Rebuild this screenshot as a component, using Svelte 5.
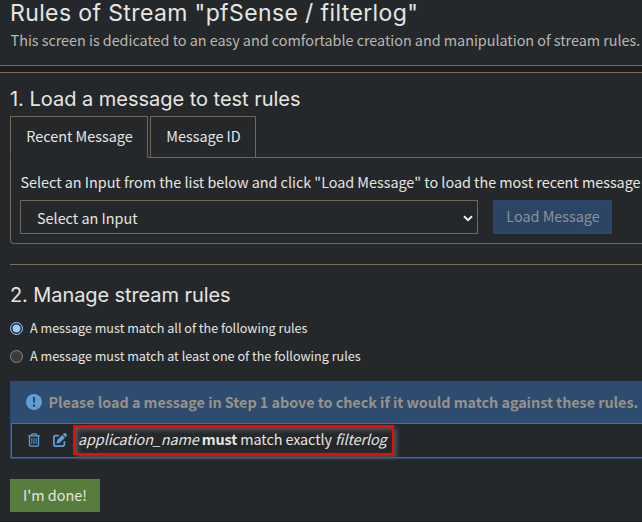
<script>
  let mode = $state('all');
  let tab = $state('recent');
</script>

<main class="page">
  <header class="card intro">
    <h1>Rules of Stream "pfSense / filterlog"</h1>
    <p>This screen is dedicated to an easy and comfortable creation and manipulation of stream rules.</p>
  </header>

  <section class="card body">
    <h2>1. Load a message to test rules</h2>
    <nav class="tabs">
      <button class="tab t1" class:active={tab === 'recent'} onclick={() => (tab = 'recent')}>Recent Message</button>
      <button class="tab t2" class:active={tab === 'id'} onclick={() => (tab = 'id')}>Message ID</button>
      <span class="rest"></span>
    </nav>
    <div class="panel">
      <p class="hint">Select an Input from the list below and click "Load Message" to load the most recent message</p>
      <div class="form">
        <div class="select">
          <span>Select an Input</span>
          <svg width="10" height="7" viewBox="0 0 10 7"><path d="M1 1.2 5 5.2 9 1.2" fill="none" stroke="#f0f0ee" stroke-width="2" /></svg>
        </div>
        <button class="load" disabled>Load Message</button>
      </div>
    </div>

    <hr />

    <h2 class="second">2. Manage stream rules</h2>
    <label class="option"><span class="radio" class:on={mode === 'all'}></span><span>A message must match all of the following rules</span></label>
    <label class="option"><span class="radio" class:on={mode === 'one'}></span><span>A message must match at least one of the following rules</span></label>

    <div class="rules">
      <div class="notice">
        <svg width="16" height="16" viewBox="0 0 16 16"><circle cx="8" cy="8" r="8" fill="#629dd4" /><path d="M6.8 3h2.4l-.35 6h-1.7z" fill="#2e4c70" /><circle cx="8" cy="11.7" r="1.35" fill="#2e4c70" /></svg>
        <strong>Please load a message in Step 1 above to check if it would match against these rules.</strong>
      </div>
      <div class="rule">
        <svg class="trash" width="12" height="14" viewBox="0 0 448 512"><path fill="#5f9fdb" d="M170.500 51.600L151.500 80h145l-19-28.400c-1.500-2.200-4-3.600-6.700-3.600h-93.700c-2.700 0-5.200 1.300-6.700 3.600zm147-26.600L354.200 80H424c13.300 0 24 10.700 24 24s-10.700 24-24 24h-8v304c0 44.200-35.800 80-80 80H112c-44.200 0-80-35.800-80-80V128h-8c-13.300 0-24-10.700-24-24S10.700 80 24 80h69.800l36.700-55.100C140.900 9.400 158.400 0 177.100 0h93.700c18.700 0 36.200 9.400 46.600 24.900zM80 128v304c0 17.700 14.300 32 32 32h224c17.700 0 32-14.300 32-32V128zm80 64v208c0 8.800-7.200 16-16 16s-16-7.200-16-16V192c0-8.800 7.200-16 16-16s16 7.200 16 16zm80 0v208c0 8.800-7.200 16-16 16s-16-7.200-16-16V192c0-8.800 7.200-16 16-16s16 7.200 16 16zm80 0v208c0 8.800-7.200 16-16 16s-16-7.200-16-16V192c0-8.800 7.200-16 16-16s16 7.200 16 16z" /></svg>
        <svg class="edit" width="14" height="14" viewBox="0 0 512 512"><path fill="#5f9fdb" d="M471.600 21.700c-21.900-21.900-57.300-21.900-79.200 0L362.300 51.700l97.900 97.900 30.100-30.100c21.900-21.900 21.900-57.300 0-79.200zM172.400 241.700c-6.100 6.100-10.800 13.600-13.500 21.900l-29.600 88.800c-2.900 8.600-.6 18.100 5.800 24.600s15.900 8.700 24.600 5.800l88.800-29.600c8.200-2.700 15.700-7.400 21.900-13.500L437.700 172.300 339.700 74.300zM96 64C43 64 0 107 0 160v256c0 53 43 96 96 96h256c53 0 96-43 96-96v-96c0-17.700-14.300-32-32-32s-32 14.300-32 32v96c0 17.700-14.300 32-32 32H96c-17.700 0-32-14.300-32-32V160c0-17.700 14.300-32 32-32h96c17.700 0 32-14.300 32-32s-14.300-32-32-32z" /></svg>
        <div class="marked"><span><em>application_name</em> <b>must</b> match exactly <em>filterlog</em></span></div>
      </div>
    </div>

    <button class="done">I'm done!</button>
  </section>
</main>

<style>
  :global(body) { background: #1c1c20; overflow: hidden; }
  .page {
    width: 642px; height: 522px; overflow: hidden;
    display: flex; flex-direction: column; gap: 6px;
    color: #e6e5e0; white-space: nowrap;
    font: 14.4px/20px "Noto Sans CJK SC", sans-serif;
  }
  * { box-sizing: border-box; }
  h1, h2, p { margin: 0; font-weight: 400; }
  button { font: inherit; color: inherit; padding: 0; margin: 0; background: none; border: 0; }
  .card { background: #24282b; padding-left: 10px; }
  .intro { height: 66px; flex: none; border-bottom: 1px solid #786d5e; }
  h1 { font: 23px/27px Inter, sans-serif; height: 30px; letter-spacing: .38px; }
  .intro p { color: #bab7ae; letter-spacing: -.03px; padding-left: .6px; }
  .body { height: 449px; flex: none; border-top: 1px solid #786d5e; display: flex; flex-direction: column; }
  h2 { font: 20px/26px Inter, sans-serif; height: 30px; margin-top: 13px; flex: none; letter-spacing: -.02px; }
  .tabs { display: flex; height: 42px; flex: none; }
  .tab { border: 1px solid #716659; height: 42px; padding: 0 0 2px 1px; }
  .tab.active { border-bottom-color: transparent; }
  .t1 { width: 138px; }
  .t2 { width: 106px; }
  .tabs::before { content: ""; order: 1; width: 2px; border-bottom: 1px solid #716659; }
  .t2, .rest { order: 2; }
  .rest { flex: 1; border-bottom: 1px solid #716659; }
  .panel { height: 86px; flex: none; border: solid #716659; border-width: 0 0 1px 1px; border-radius: 0 0 0 4px; padding: 14px 0 0 9px; }
  .hint { height: 28px; letter-spacing: -.025px; padding-left: .5px; }
  .form { display: flex; gap: 15px; }
  .select { width: 458px; height: 34px; border: 1px solid #716659; display: flex; align-items: center; justify-content: space-between; padding: 2px 4px 0 16px; }
  .load { width: 119px; height: 34px; background: #2d4565; border: 1px solid #2c4870; color: #8b9299; padding: 0 0 2px 1px; }
  hr { width: 100%; height: 1px; margin: 20px 0 0; border: 0; background: #786d5e; flex: none; }
  .second { margin-top: 17px; height: 32px; letter-spacing: -.09px; }
  .option { height: 28px; display: flex; align-items: center; gap: 7px; font-size: 12.6px; flex: none; }
  .radio { width: 13px; height: 13px; border-radius: 50%; border: 1px solid #858585; background: #3b3b3b; }
  .radio.on { border-color: #99c8ff; background: radial-gradient(circle, #99c8ff 0 3.7px, #2d3137 4.300px); }
  .rules { height: 78px; margin-top: 11px; border: 1px solid #2c4870; border-right: 0; background: #2e4c70; flex: none; }
  .notice { height: 41px; display: flex; align-items: center; gap: 6.500px; padding: 0 0 1px 15px; color: #999187; letter-spacing: -.045px; }
  .rule { height: 35px; background: #24282b; border: 1px solid #716659; border-right: 0; display: flex; align-items: center; padding-left: 16px; }
  .trash, .edit { margin-bottom: 2px; }
  .edit { margin-left: 13px; }
  .marked { width: 321px; height: 30px; margin: 0 248px 1px auto; border: 2px solid #f00; padding: 0 0 2px 3px; display: flex; align-items: center; letter-spacing: -.1px; box-shadow: 3px 3px 4px #4c5154, inset 3px 3px 5px #565b5d; }
  .done { width: 90px; height: 33px; margin-top: 20px; padding-bottom: 2px; background: #587c3c; flex: none; }
</style>
